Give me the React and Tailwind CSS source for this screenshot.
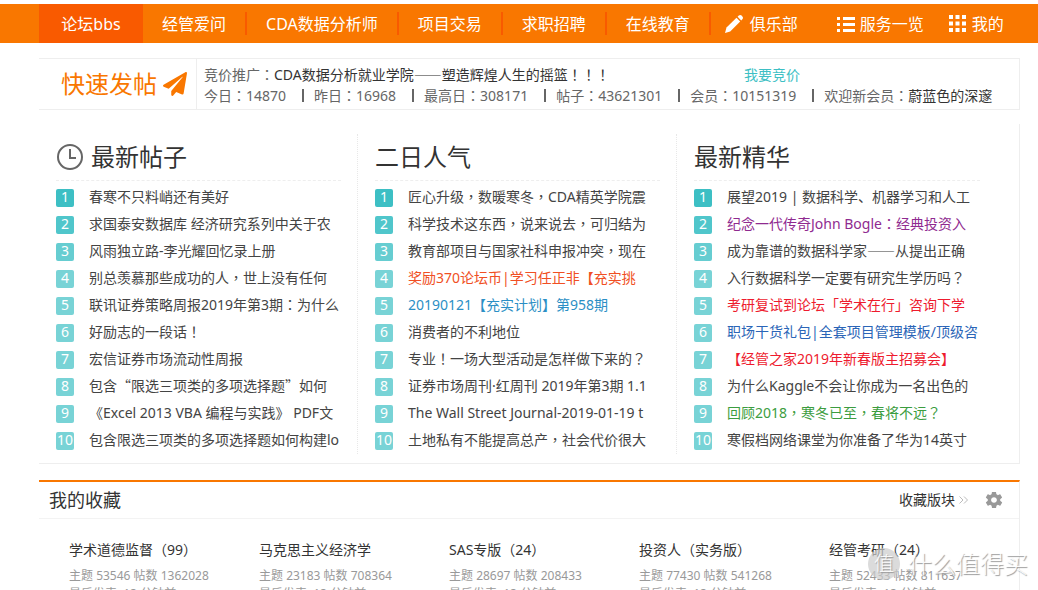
import React from 'react';
import clsx from 'clsx';
import { FaPaperPlane } from 'react-icons/fa';
import { IoMdSettings } from 'react-icons/io';

const navItems = ['经管爱问', 'CDA数据分析师', '项目交易', '求职招聘', '在线教育'];

const stats = [
    { label: '今日', value: '14870' },
    { label: '昨日', value: '16968' },
    { label: '最高日', value: '308171' },
    { label: '帖子', value: '43621301' },
    { label: '会员', value: '10151319' },
];

const columns = [
    {
        title: '最新帖子',
        icon: true,
        posts: [
            { text: '春寒不只料峭还有美好' },
            { text: '求国泰安数据库 经济研究系列中关于农' },
            { text: '风雨独立路-李光耀回忆录上册' },
            { text: '别总羡慕那些成功的人，世上没有任何' },
            { text: '联讯证券策略周报2019年第3期：为什么' },
            { text: '好励志的一段话！' },
            { text: '宏信证券市场流动性周报' },
            { text: '包含“限选三项类的多项选择题”如何' },
            { text: '《Excel 2013 VBA 编程与实践》 PDF文' },
            { text: '包含限选三项类的多项选择题如何构建lo' },
        ],
    },
    {
        title: '二日人气',
        posts: [
            { text: '匠心升级，数暖寒冬，CDA精英学院震' },
            { text: '科学技术这东西，说来说去，可归结为' },
            { text: '教育部项目与国家社科申报冲突，现在' },
            { text: '奖励370论坛币|学习任正非【充实挑', color: 'text-[#f04f23]' },
            { text: '20190121【充实计划】第958期', color: 'text-[#2b8fc5]' },
            { text: '消费者的不利地位' },
            { text: '专业！一场大型活动是怎样做下来的？' },
            { text: '证券市场周刊·红周刊 2019年第3期 1.1' },
            { text: 'The Wall Street Journal-2019-01-19 t' },
            { text: '土地私有不能提高总产，社会代价很大' },
        ],
    },
    {
        title: '最新精华',
        posts: [
            { text: '展望2019 | 数据科学、机器学习和人工' },
            { text: '纪念一代传奇John Bogle：经典投资入', color: 'text-[#8f2a90]' },
            { text: '成为靠谱的数据科学家——从提出正确' },
            { text: '入行数据科学一定要有研究生学历吗？' },
            { text: '考研复试到论坛「学术在行」咨询下学', color: 'text-[#ee1b2e]' },
            { text: '职场干货礼包|全套项目管理模板/顶级咨', color: 'text-[#2b65b7]' },
            { text: '【经管之家2019年新春版主招募会】', color: 'text-[#ee1b2e]' },
            { text: '为什么Kaggle不会让你成为一名出色的' },
            { text: '回顾2018，寒冬已至，春将不远？', color: 'text-[#3c9d40]' },
            { text: '寒假档网络课堂为你准备了华为14英寸' },
        ],
    },
];

const badgeColors = ['bg-[#3dbfc4]', 'bg-[#50c6cb]', 'bg-[#66cdd1]'];

const forums = [
    { name: '学术道德监督（99）', topics: '53546', replies: '1362028' },
    { name: '马克思主义经济学', topics: '23183', replies: '708364' },
    { name: 'SAS专版（24）', topics: '28697', replies: '208433' },
    { name: '投资人（实务版）', topics: '77430', replies: '541268' },
    { name: '经管考研（24）', topics: '52433', replies: '811637' },
];

// centred punctuation comes from the TC face, full-width quotes and dashes from SC
const Zh = ({ children }) =>
    children.split(/([：，！？]+|[“”—]+)/).map((part, i) => {
        if (/^[：，！？]/.test(part)) return <span key={i} lang="zh-TW" className="font-['Noto_Sans_CJK_TC',sans-serif] leading-none">{part}</span>;
        if (/^[“”—]/.test(part)) return <span key={i} lang="zh-CN" className="font-['Noto_Sans_CJK_SC',sans-serif] leading-none">{part}</span>;
        return part;
    });

const PencilIcon = () => (
    <svg width="18" height="18" viewBox="0 0 18 18" fill="#fff">
        <path d="M0 18l1.5-5.5L11.5 2.8l3.7 3.7L5.2 16.4z" />
        <path d="M12.6 1.8l1.2-1.2c.8-.8 2-.8 2.8 0l.8.8c.8.8.8 2 0 2.8l-1.2 1.2z" />
    </svg>
);

const ListIcon = () => (
    <svg width="18" height="16" viewBox="0 0 18 16" fill="#fff">
        <path d="M0 1h3v3H0zM6 1h12v3H6zM0 7h3v3H0zM6 7h12v3H6zM0 13h3v3H0zM6 13h12v3H6z" />
    </svg>
);

const GridIcon = () => (
    <svg width="17" height="17" viewBox="0 0 17 17" fill="#fff">
        <path d="M0 0h4v4H0zM6.500 0h4v4h-4zM13 0h4v4h-4zM0 6.500h4v4H0zM6.500 6.500h4v4h-4zM13 6.500h4v4h-4zM0 13h4v4H0zM6.500 13h4v4h-4zM13 13h4v4h-4z" />
    </svg>
);

const ClockIcon = () => (
    <svg width="27" height="26" viewBox="0 0 27 26" fill="none" stroke="#666" strokeWidth="2">
        <circle cx="14" cy="13" r="12" />
        <path d="M14 5v9h6" />
    </svg>
);

const NavBar = () => (
    <nav className="flex h-[39px] items-center bg-[#f97700] pl-[39px] text-base text-white">
        <a href="#" className="flex h-full w-[104px] shrink-0 items-center justify-center bg-[#f95a00]">论坛bbs</a>
        {navItems.map((item) => (
            <React.Fragment key={item}>
                <a href="#" className="px-[19px] whitespace-nowrap">{item}</a>
                <span className="h-[23px] w-0.5 shrink-0 bg-[#f95a00]" />
            </React.Fragment>
        ))}
        <a href="#" className="flex items-center gap-[7px] pl-3.5 whitespace-nowrap"><PencilIcon />俱乐部</a>
        <a href="#" className="flex items-center gap-[5px] pl-[39px] whitespace-nowrap"><ListIcon />服务一览</a>
        <a href="#" className="flex items-center gap-1.5 pl-[25px] whitespace-nowrap"><GridIcon />我的</a>
    </nav>
);

const QuickPost = () => (
    <section className="mt-[15px] flex h-[52px] border-y border-r border-[#eee]">
        <a href="#" className="flex w-[158px] shrink-0 items-center gap-1.5 border-r border-[#eee] pl-[22px] text-2xl text-[#f97700]">
            快速发帖
            <FaPaperPlane size={24} />
        </a>
        <div className="pt-[5px] pl-[7px] text-sm leading-[21px] whitespace-nowrap text-[#666]">
            <div className="flex">
                <span><Zh>竞价推广：</Zh></span>
                <a href="#" className="w-[470px] text-[#333]"><Zh>CDA数据分析就业学院——塑造辉煌人生的摇篮！！！</Zh></a>
                <a href="#" className="text-[#3dbfc4]">我要竞价</a>
            </div>
            <div className="flex items-center">
                {stats.map((s) => (
                    <React.Fragment key={s.label}>
                        <span><Zh>{`${s.label}：${s.value}`}</Zh></span>
                        <span className="mr-2.5 ml-4 h-[13px] w-0.5 bg-[#666]" />
                    </React.Fragment>
                ))}
                <span><Zh>欢迎新会员：</Zh><a href="#" className="text-[#333]">蔚蓝色的深邃</a></span>
            </div>
        </div>
    </section>
);

const PostColumn = ({ title, icon, posts }) => (
    <div className="border-r border-dotted border-[#e8e8e8] pr-4 pl-[17px] last:border-r-0">
        <h2 className="flex h-[47px] items-center gap-2 border-b border-dashed border-[#eee] text-2xl text-[#333]">
            {icon && <ClockIcon />}
            {title}
        </h2>
        <ol className="pt-[3px]">
            {posts.map((post, i) => (
                <li key={post.text} className="flex h-[27px] items-center gap-[15px] text-sm whitespace-nowrap">
                    <span className={clsx('flex size-[18px] shrink-0 items-center justify-center rounded-xs pb-0.5 leading-4 text-white', badgeColors[i] || 'bg-[#78d3d6]')}>{i + 1}</span>
                    <a href="#" className={clsx('pb-0.5', post.color || 'text-[#444]')}><Zh>{post.text}</Zh></a>
                </li>
            ))}
        </ol>
    </div>
);

const Favorites = () => (
    <section className="mt-4 border-t-2 border-r border-t-[#f97700] border-r-[#eee]">
        <div className="flex h-[37px] items-center border-b border-[#f3f3f3] pr-[15px] pl-2.5">
            <h2 className="grow text-lg text-[#333]">我的收藏</h2>
            <a href="#" className="flex items-center gap-1 text-sm text-[#333]">
                收藏版块
                <svg width="9" height="8" viewBox="0 0 9 8" fill="none" stroke="#bbb">
                    <path d="M.5.5L4 4 .5 7.500M5 .5L8.500 4 5 7.500" />
                </svg>
            </a>
            <button type="button" aria-label="设置" className="ml-4 text-[#999]"><IoMdSettings size={20} /></button>
        </div>
        <ul className="grid grid-cols-5 pt-[19px] pl-[30px]">
            {forums.map((f) => (
                <li key={f.name} className="whitespace-nowrap">
                    <a href="#" className="block text-sm leading-6 text-[#333]">{f.name}</a>
                    <p className="pt-[5px] text-xs leading-[18px] text-[#999]">主题 {f.topics} 帖数 {f.replies}</p>
                    <p className="text-xs leading-[18px] text-[#999]">最后发表: 13 分钟前</p>
                </li>
            ))}
        </ul>
    </section>
);

const App = () => {
    return (
        <div className="relative h-screen overflow-hidden bg-white pt-1 font-['Noto_Sans','Noto_Sans_CJK_SC',sans-serif]">
            <NavBar />
            <main className="pr-[18px] pl-[39px]">
                <QuickPost />
                <section className="mt-3.5 grid grid-cols-3 border-r border-b border-[#eee] pt-2.5 pr-[23px] pb-[9px]">
                    {columns.map((col) => (
                        <PostColumn key={col.title} {...col} />
                    ))}
                </section>
                <Favorites />
            </main>
            <div className="absolute right-2.5 bottom-2.5 flex items-center gap-2 text-2xl font-light text-white/90 text-shadow-[1px_1px_1px_#999]">
                <span className="flex size-8 items-center justify-center rounded-full bg-[#ccc]/70 text-xl">值</span>
                什么值得买
            </div>
        </div>
    );
};

export default App;
